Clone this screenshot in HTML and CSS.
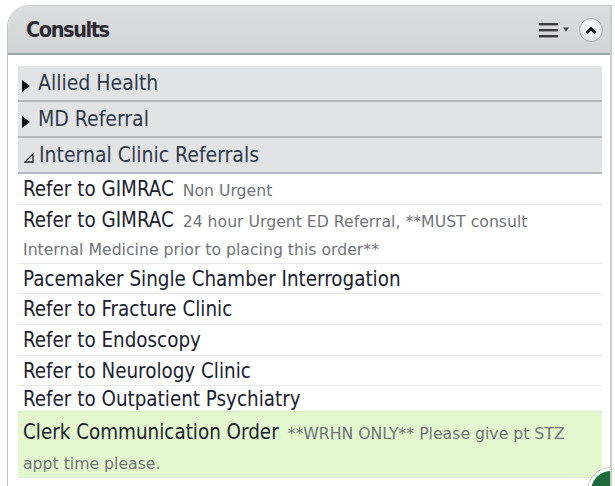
FILE: index.html
```html
<!DOCTYPE html>
<html>
<head>
<meta charset="utf-8">
<link rel="stylesheet" href="styles.css">
</head>
<body>
<div class="panel">
  <div class="header">
    <h2 class="title">Consults</h2>
    <div class="tools">
      <svg class="menu" width="31" height="16" viewBox="0 0 31 16">
        <rect x="0" y="1" width="19" height="2.4" fill="#3a3a3a"/>
        <rect x="0" y="7" width="19" height="2.4" fill="#3a3a3a"/>
        <rect x="0" y="13" width="19" height="2.4" fill="#3a3a3a"/>
        <polygon points="24,5.5 30,5.5 27,9.5" fill="#3a3a3a"/>
      </svg>
      <span class="collapse">
        <svg width="14" height="10" viewBox="0 0 14 10"><polyline points="2.5,8 7,3.5 11.5,8" fill="none" stroke="#111" stroke-width="3"/></svg>
      </span>
    </div>
  </div>
  <div class="body">
    <div class="list">
      <div class="group"><span class="tri closed"></span>Allied Health</div>
      <div class="group"><span class="tri closed"></span>MD Referral</div>
      <div class="group"><svg class="tri-open" width="10" height="10" viewBox="0 0 10 10"><polygon points="1,9 9,9 9,1" fill="none" stroke="#222" stroke-width="1.3"/></svg>Internal Clinic Referrals</div>
      <div class="item">Refer to GIMRAC <span class="detail">Non Urgent</span></div>
      <div class="item">Refer to GIMRAC <span class="detail">24 hour Urgent ED Referral, **MUST consult<br>Internal Medicine prior to placing this order**</span></div>
      <div class="item">Pacemaker Single Chamber Interrogation</div>
      <div class="item">Refer to Fracture Clinic</div>
      <div class="item">Refer to Endoscopy</div>
      <div class="item">Refer to Neurology Clinic</div>
      <div class="item short">Refer to Outpatient Psychiatry</div>
      <div class="item hl">Clerk Communication Order <span class="detail">**WRHN ONLY** Please give pt STZ<br>appt time please.</span></div>
    </div>
  </div>
  <span class="corner-badge"></span>
</div>
</body>
</html>
```

FILE: styles.css
```css
html, body {
  margin: 0;
  padding: 0;
  background: #ffffff;
  overflow: hidden;
}
body {
  font-family: "DejaVu Sans Condensed", "DejaVu Sans", sans-serif;
  color: #1c2230;
  height: 486px;
}
.panel {
  position: relative;
  margin: 5px 3px 0 7px;
  height: 481px;
  border-left: 1px solid #c3c6c9;
  border-right: 2px solid #c9ccce;
  box-sizing: border-box;
  border-top-left-radius: 22px;
  overflow: hidden;
}
.header {
  background: linear-gradient(#dcdddf, #d2d3d5);
  border-top: 1px solid #c9cbcd;
  border-top-left-radius: 22px;
  border-bottom: 2px solid #9aa3ab;
  display: flex;
  align-items: center;
  justify-content: space-between;
  padding: 0 7px 0 18px;
  box-sizing: border-box;
  height: 50px;
}
.title {
  margin: 0;
  font-size: 21.5px;
  font-weight: bold;
  color: #2a2a30;
  letter-spacing: -1.4px;
}
.tools {
  display: flex;
  align-items: center;
  gap: 9px;
}
.menu { display: block; }
.collapse {
  width: 24px;
  height: 24px;
  border-radius: 50%;
  border: 1px solid #a9adb1;
  background: radial-gradient(circle at 50% 35%, #ffffff, #e4e5e7 70%, #c9cbcd);
  display: flex;
  align-items: center;
  justify-content: center;
  box-sizing: border-box;
}
.collapse svg { display: block; }
.body {
  padding: 11px 8px 0 10px;
}
.list {
  display: flex;
  flex-direction: column;
}
.group {
  background: #e2e3e5;
  border-bottom: 2px solid #b4b8bc;
  height: 34px;
  line-height: 34px;
  font-size: 21px;
  color: #2e3a4a;
  padding-left: 3px;
  display: flex;
  align-items: center;
}
.group:last-of-type { height: 32px; }
.tri {
  display: inline-block;
  width: 0;
  height: 0;
  border-top: 6px solid transparent;
  border-bottom: 6px solid transparent;
  border-left: 8px solid #111;
  margin: 6px 8px 0 1px;
}
.tri-open { margin: 5px 5px 0 3px; display: block; }
.item {
  font-size: 20.4px;
  line-height: 28.6px;
  padding: 1px 5px 0 5px;
  border-bottom: 1px solid #e7e8ea;
  color: #1c2230;
}
.item.short { line-height: 24px; border-bottom: none; }
.detail {
  font-family: "DejaVu Sans", sans-serif;
  font-size: 15.7px;
  line-height: 1;
  color: #707378;
  margin-left: 3px;
}
.item.hl {
  background: #e3f8cf;
  border-top: 1px solid #d7eac2;
  border-bottom: 1px solid #e4e8e0;
  line-height: 29.5px;
  padding-top: 6px;
}
.corner-badge {
  position: absolute;
  right: -24px;
  bottom: -28px;
  width: 40px;
  height: 40px;
  border-radius: 50%;
  background: #1f6a3a;
  border: 3px solid #ffffff;
  box-shadow: 0 0 0 1px #c4c7c4;
}
```
